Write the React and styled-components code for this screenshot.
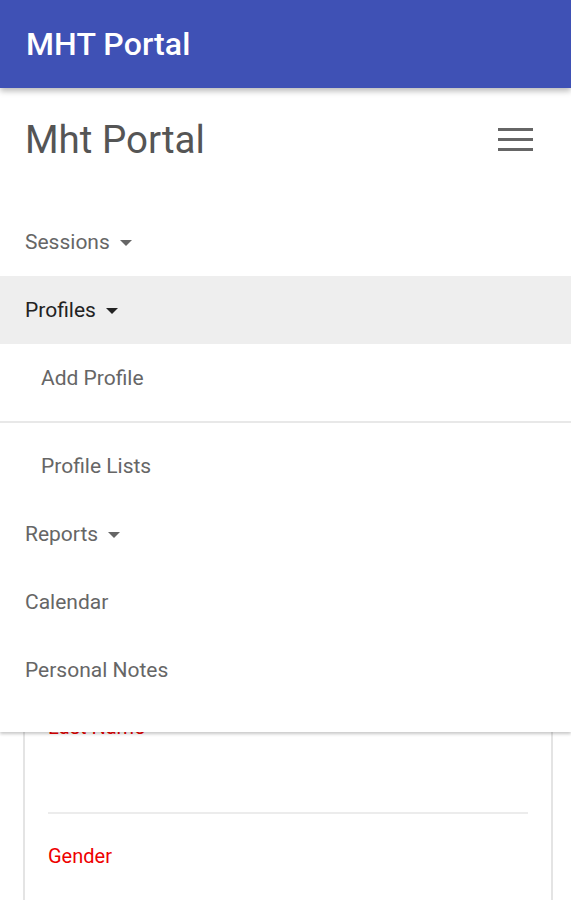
import React from 'react';
import styled, { createGlobalStyle } from 'styled-components';

const GlobalStyle = createGlobalStyle`
  html, body {
    margin: 0;
    padding: 0;
    background: #ffffff;
    font-family: Roboto, "Noto Sans", "Liberation Sans", sans-serif;
  }
  * {
    box-sizing: border-box;
  }
`;

const Page = styled.div`
  display: flex;
  flex-direction: column;
  width: 571px;
  height: 900px;
  overflow: hidden;
`;

const AppBar = styled.header`
  position: relative;
  z-index: 3;
  display: flex;
  align-items: center;
  flex: 0 0 88px;
  padding: 0 26px;
  background: #3f51b5;
  box-shadow: 0 3px 6px rgba(0, 0, 0, 0.28);
`;

const AppTitle = styled.h1`
  margin: 0;
  font-size: 32px;
  font-weight: 500;
  color: #ffffff;
  letter-spacing: 0.1px;
`;

const Body = styled.div`
  position: relative;
  flex: 1;
`;

/* the dropdown nav sits over the form */
const Drawer = styled.nav`
  position: absolute;
  z-index: 2;
  top: 0;
  left: 0;
  right: 0;
  height: 644px;
  background: #ffffff;
  box-shadow: 0 2px 3px rgba(0, 0, 0, 0.22);
`;

const DrawerHeader = styled.div`
  display: flex;
  align-items: center;
  justify-content: space-between;
  height: 102px;
  padding: 0 38px 0 25px;
`;

const Brand = styled.div`
  font-size: 38.5px;
  font-weight: 400;
  color: #555555;
`;

const Burger = styled.button`
  display: flex;
  flex-direction: column;
  gap: 7px;
  width: 35px;
  padding: 0;
  border: 0;
  background: transparent;

  span {
    display: block;
    height: 3px;
    background: #666666;
  }
`;

const MenuList = styled.ul`
  list-style: none;
  margin: 0;
  padding: 18px 0 0;
`;

const MenuItem = styled.li`
  display: flex;
  align-items: center;
  height: 68px;
  padding-left: ${(p) => (p.$sub ? '41px' : '25px')};
  font-size: 21px;
  color: ${(p) => (p.$active ? '#222222' : '#666666')};
  background: ${(p) => (p.$active ? '#eeeeee' : 'transparent')};
`;

const Caret = styled.span`
  display: inline-block;
  margin-left: 10px;
  margin-top: 2px;
  border-left: 6px solid transparent;
  border-right: 6px solid transparent;
  border-top: 6px solid ${(p) => (p.$active ? '#222222' : '#666666')};
`;

const MenuDivider = styled.li`
  height: 2px;
  margin: 9px 0;
  background: #e8e8e8;
`;

const Content = styled.main`
  padding: 24px 18px 0 23px;
`;

const Card = styled.section`
  border: 2px solid #e4e4e4;
  border-bottom: 0;
  padding: 0 23px;
  height: 900px;
`;

const CardTitle = styled.h2`
  margin: 0;
  padding: 24px 0 29px;
  font-size: 26px;
  line-height: 32px;
  font-weight: 400;
  color: #444444;
`;

const Field = styled.div`
  margin-bottom: 30px;
`;

const FieldLabel = styled.label`
  display: block;
  font-size: 20px;
  line-height: 24px;
  color: #ee0000;
`;

const FieldInput = styled.div`
  height: 75px;
  border-bottom: 2px solid #ececec;
`;

const menu = [
  { label: 'Sessions', caret: true },
  { label: 'Profiles', caret: true, active: true },
  { label: 'Add Profile', sub: true },
  { divider: true },
  { label: 'Profile Lists', sub: true },
  { label: 'Reports', caret: true },
  { label: 'Calendar' },
  { label: 'Personal Notes' },
];

const fields = ['Profile Type', 'Title', 'First Name', 'Middle Name', 'Last Name', 'Gender'];

export default function App() {
  return (
    <Page>
      <GlobalStyle />
      <AppBar>
        <AppTitle>MHT Portal</AppTitle>
      </AppBar>
      <Body>
        <Drawer>
          <DrawerHeader>
            <Brand>Mht Portal</Brand>
            <Burger aria-label="menu">
              <span />
              <span />
              <span />
            </Burger>
          </DrawerHeader>
          <MenuList>
            {menu.map((m, i) =>
              m.divider ? (
                <MenuDivider key={i} />
              ) : (
                <MenuItem key={m.label} $sub={m.sub} $active={m.active}>
                  {m.label}
                  {m.caret && <Caret $active={m.active} />}
                </MenuItem>
              )
            )}
          </MenuList>
        </Drawer>
        <Content>
          <Card>
            <CardTitle>Add Profile</CardTitle>
            {fields.map((f) => (
              <Field key={f}>
                <FieldLabel>{f}</FieldLabel>
                <FieldInput />
              </Field>
            ))}
          </Card>
        </Content>
      </Body>
    </Page>
  );
}
